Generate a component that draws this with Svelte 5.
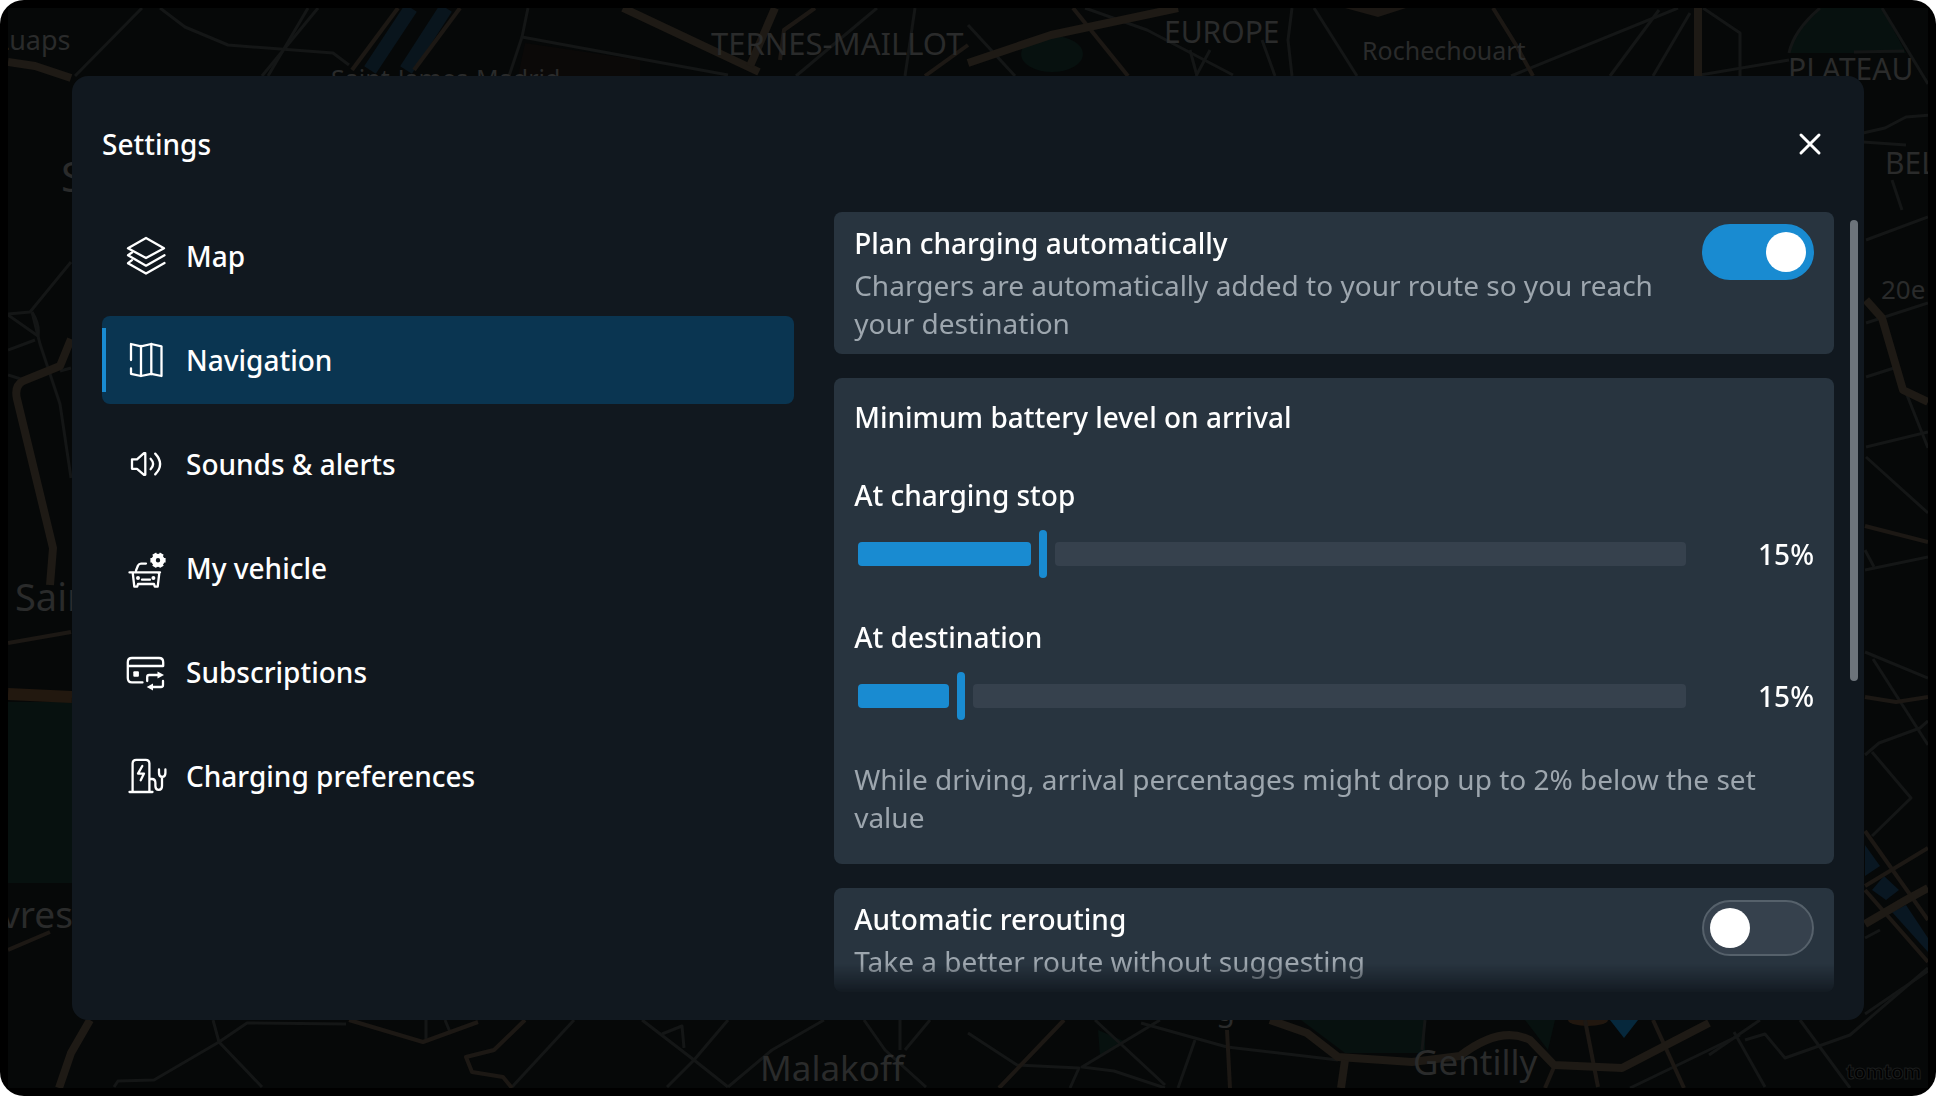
<script lang="ts">
  let active = $state("navigation");
  let planCharging = $state(true);
  let rerouting = $state(false);

  const menu = [
    { id: "map", label: "Map" },
    { id: "navigation", label: "Navigation" },
    { id: "sounds", label: "Sounds & alerts" },
    { id: "vehicle", label: "My vehicle" },
    { id: "subscriptions", label: "Subscriptions" },
    { id: "charging", label: "Charging preferences" },
  ];

  let levels = $state([
    { id: "stop", label: "At charging stop", position: 22, text: "15%" },
    { id: "destination", label: "At destination", position: 12, text: "15%" },
  ]);

  const streets = [
    "M142 8L75 76", "M160 8L185 27L228 45L333 53L349 65", "M318 8L262 76", "M308 8L268 76", "M528 8L522 37L509 76",
    "M522 37L728 75", "M877 8L796 76", "M915 8L905 76", "M968 25L1015 76", "M1085 8L1147 30L1233 75", "M1292 8L1288 40L1292 76",
    "M1314 8L1357 76", "M1262 40L1275 76", "M1190 50L1197 76", "M1210 50L1196 76", "M1678 8L1511 76", "M1659 10L1610 76", "M1690 13L1653 76",
    "M1703 8L1740 33L1740 76", "M1700 75L1789 60", "M1820 8Q1794 30 1789 53", "M1882 8L1928 84", "M1854 52L1904 51",
    "M1863 133L1885 128L1906 117L1930 115", "M1863 142L1906 145", "M1892 180L1902 210", "M1866 240L1928 217", "M1866 323L1928 303",
    "M1866 377L1894 368", "M1905 390L1928 448", "M1866 447L1928 432", "M1866 457L1928 513", "M1865 570L1928 557",
    "M1865 550L1874 567", "M1865 652L1928 678", "M1873 659L1928 745", "M1865 755L1879 743L1920 728L1928 721",
    "M1872 752L1911 798L1872 836", "M1865 1014L1928 971", "M1865 938L1880 930",
    "M8 314L30 312L71 262", "M32 312L40 344L60 404L71 478", "M32 312Q40 325 38 336L8 315", "M8 350L35 340", "M8 375L24 380M60 371L71 368",
    "M114 1087L118 1081L154 1080L219 1042L247 1023L346 1024", "M213 1020L219 1042L262 1087", "M426 1040L426 1020", "M445 1020L450 1032",
    "M574 1020L512 1087", "M642 1020L694 1060L728 1087", "M728 1020L694 1060L667 1087", "M662 1034L682 1026L684 1048", "M824 1020L772 1050L728 1087",
    "M864 1020L885 1050L926 1087", "M900 1020L900 1050", "M930 1020L905 1050", "M968 1033L1017 1065L1079 1068L1070 1088",
    "M1095 1020L1165 1085", "M1160 1020L1082 1067L1114 1071L1165 1088", "M1141 1023L1227 1047L1338 1060", "M1195 1040L1178 1088",
    "M1425 1020L1422 1050", "M1734 1032L1765 1087", "M1709 1055L1760 1020", "M1745 1040L1765 1034L1785 1058L1850 1035L1928 968",
    "M1800 1020L1850 1088", "M1630 1088L1740 1035",
  ];
  const thinRoads = [
    "M398 8L352 70", "M460 8L414 70", "M1073 8L1128 76", "M1493 8L1516 45L1533 76", "M8 643L71 632", "M1865 526L1928 542",
    "M1865 697L1896 702L1928 697", "M1865 831L1928 920", "M1865 886L1928 848", "M1865 890L1928 962", "M1064 1020L999 1088",
    "M349 1020L423 1042L478 1022", "M525 1020L494 1050L466 1057L472 1072L503 1077L512 1088", "M1585 1020L1598 1087",
    "M1653 1020L1684 1088", "M1554 1067L1545 1088", "M815 8L784 30L780 60", "M925 76L968 45", "M8 950L50 932", "M1227 1030L1230 1088",
  ];
  const mainRoads = [
    "M623 8L759 72", "M775 8L750 66", "M968 63L1051 35L1178 8", "M1698 8L1698 76", "M1866 300L1882 318L1903 390L1928 402",
    "M1865 924L1906 900L1928 888", "M71 339L60 366L23 381Q14 386 17 399L53 548L50 585", "M90 1020L71 1053L59 1088",
    "M1270 1020L1307 1033L1338 1057L1412 1062L1460 1056Q1500 1025 1530 1040L1554 1065L1622 1068L1709 1023",
    "M1345 1060L1341 1088", "M8 62L35 66L71 78",
  ];
  const places = [
    { name: "Luaps", x: -5, y: 50, size: 27 },
    { name: "Saint-James-Madrid", x: 331, y: 88, size: 25 },
    { name: "TERNES-MAILLOT", x: 711, y: 55, size: 31 },
    { name: "EUROPE", x: 1164, y: 43, size: 30 },
    { name: "Rochechouart", x: 1362, y: 60, size: 25 },
    { name: "PLATEAU", x: 1788, y: 80, size: 30 },
    { name: "BEL", x: 1885, y: 174, size: 30 },
    { name: "20e", x: 1881, y: 299, size: 26 },
    { name: "S", x: 61, y: 192, size: 42 },
    { name: "Sain", x: 15, y: 611, size: 38 },
    { name: "vres-", x: 1, y: 928, size: 37 },
    { name: "Malakoff", x: 760, y: 1081, size: 35 },
    { name: "g", x: 1216, y: 1021, size: 31 },
    { name: "Gentilly", x: 1413, y: 1075, size: 35 },
  ];
</script>

{#snippet toggle(checked: boolean, id: string, onchange: () => void)}
  <input class="toggle" type="checkbox" role="switch" {id} {checked} {onchange} />
{/snippet}

<div class="screen">
  <svg class="map" viewBox="8 8 1920 1080" preserveAspectRatio="xMidYMid slice" aria-hidden="true">
    <rect x="8" y="8" width="1920" height="1080" fill="#060808" />
    <g fill="#07110f">
      <path d="M8 702H72V883H8z" />
      <ellipse cx="1052" cy="54" rx="31" ry="18" />
      <path d="M1820 8H1882L1906 53H1789Q1794 30 1820 8z" />
      <path d="M1301 1020H1425V1053H1345z" />
      <path d="M1525 1020H1555L1548 1050z" />
      <path d="M1098 1030L1126 1042L1100 1056z" />
    </g>
    <path d="M525 43L640 60V76H518z" fill="#0b0908" />
    <g stroke="#09151d" stroke-width="14">
      <path d="M411 8L370 70M446 8L406 70" />
    </g>
    <g fill="#091722">
      <path d="M1865 845L1880 866L1865 876z" />
      <path d="M1872 890L1884 876L1899 890L1886 900z" />
      <path d="M1892 912L1906 905L1928 938V952z" />
    </g>
    <path d="M1345 8L1378 17L1406 8z" fill="#1c1814" />
    <ellipse cx="1588" cy="1020" rx="20" ry="6" fill="#21170f" />
    <path d="M1610 1020H1638L1624 1038z" fill="#06283c" />
    <g fill="none" stroke-linejoin="round">
      <g stroke="#141616" stroke-width="3">
        {#each streets as d}<path {d} />{/each}
      </g>
      <g stroke="#1c1814" stroke-width="4">
        {#each thinRoads as d}<path {d} />{/each}
      </g>
      <g stroke="#1e1a15" stroke-width="8">
        {#each mainRoads as d}<path {d} />{/each}
      </g>
      <path d="M8 694L72 697" stroke="#22180f" stroke-width="12" />
    </g>
    <g class="places">
      {#each places as place}
        <text x={place.x} y={place.y} font-size={place.size}>{place.name}</text>
      {/each}
    </g>
    <text class="brand" x="1846" y="1079">tomtom</text>
  </svg>

  <main class="panel">
    <header>
      <h1>Settings</h1>
      <button class="close" aria-label="Close">
        <svg viewBox="0 0 48 48"><path d="M15 15L33 33M33 15L15 33" stroke-width="3" /></svg>
      </button>
    </header>

    <div class="body">
      <nav>
        {#each menu as item}
          <button class="menu-item" class:active={active === item.id} onclick={() => (active = item.id)}>
            <svg viewBox="0 0 48 48" aria-hidden="true">
              {#if item.id === "map"}
                <path d="M24 6L42 16.3L24 26L6 16.3z" />
                <path d="M10 20.5L6 23.2L24 33.7L42.5 23.2" />
                <path d="M10 28.2L6 31.2L24 41.5L42.5 31" />
              {:else if item.id === "navigation"}
                <path d="M9 24V8L19 10.3L29.3 8L39.5 10.3V40L29.3 37.8L19 40L9 37.8V32.5" />
                <path d="M19 10V40M29.3 8V38" />
              {:else if item.id === "sounds"}
                <path d="M10 19.3H15L22 13.2H23.3V34.8H22L15 28.8H10z" />
                <path d="M28.6 18.8Q33.6 24 28.6 29.2M33.2 13.6Q43 24 33.2 34.4" />
              {:else if item.id === "vehicle"}
                <path d="M14 26.5L16 21.5Q17 19.6 19 19.6H24M7.5 28.4H38M10.8 29.5L12.3 42.7H15.2L16 40H32L32.8 42.7H35.7L37.2 30Q37 28.4 35 28.4" />
                <path d="M20 35.7H28" />
                <circle class="solid" cx="16" cy="34" r="2" />
                <circle class="solid" cx="31.4" cy="34" r="2" />
                <path class="gear" d="M32.2 9.7L34.5 13.7M39.8 9.7L37.5 13.7M43.6 16.3H39M39.8 22.9L37.5 18.9M32.2 22.9L34.5 18.9M28.4 16.3H33" />
                <circle cx="36" cy="16.3" r="4.4" stroke-width="4.4" />
              {:else if item.id === "subscriptions"}
                <path d="M20.5 34.4H10Q5.8 34.4 5.8 30V14.3Q5.8 10 10 10H37Q41.2 10 41.2 14.3V18H6" />
                <rect class="solid" x="11.3" y="23.2" width="5.6" height="5.6" rx="1" />
                <path d="M25.2 33V29Q25.2 27 27.2 27H36M41 33V37Q41 39 39 39H30" />
                <path class="solid" d="M35.5 23.4L42 27L35.5 30.6zM31 35.4L24.7 39L31 42.6z" />
              {:else}
                <path d="M7.5 40H30.5M10.6 40V11.5Q10.6 7.8 14.3 7.8H23.7Q27.4 7.8 27.4 11.5V40" />
                <path d="M20.3 14L16 21.6H22L18.7 28.3" />
                <path d="M28 27H30Q33.4 27 33.4 31V34Q33.4 37.8 36.7 37.8Q40 37.8 40 34V25M37 17.5V21Q37 24.8 40.2 24.8Q43.4 24.8 43.4 21V17.5" />
              {/if}
            </svg>
            {item.label}
          </button>
        {/each}
      </nav>

      <div class="cards">
        <section class="card row">
          <div class="text">
            <label for="plan">Plan charging automatically</label>
            <p>Chargers are automatically added to your route so you reach your destination</p>
          </div>
          {@render toggle(planCharging, "plan", () => (planCharging = !planCharging))}
        </section>

        <section class="card battery">
          <h2>Minimum battery level on arrival</h2>
          {#each levels as level}
            <div class="level">
              <label for={level.id}>{level.label}</label>
              <div class="level-row">
                <div class="slider">
                  <div class="fill" style="width: calc((100% - 8px) * {level.position / 100} - 8px)"></div>
                  <div class="thumb"></div>
                  <div class="rest"></div>
                  <input type="range" id={level.id} min="0" max="100" bind:value={level.position} />
                </div>
                <output for={level.id}>{level.text}</output>
              </div>
            </div>
          {/each}
          <p>While driving, arrival percentages might drop up to 2% below the set value</p>
        </section>

        <section class="card row">
          <div class="text">
            <label for="reroute">Automatic rerouting</label>
            <p>Take a better route without suggesting</p>
          </div>
          {@render toggle(rerouting, "reroute", () => (rerouting = !rerouting))}
        </section>
      </div>
      <div class="scrollbar"></div>
    </div>
  </main>
</div>

<style>
  :global(body) {
    background: #fff;
  }

  .screen {
    position: relative;
    box-sizing: border-box;
    display: flex;
    height: 100vh;
    padding: 76px 72px;
    background: #000;
    border-radius: 24px;
    overflow: hidden;
    font-family: "Noto Sans", "Open Sans", sans-serif;
    font-size: 28px;
    font-weight: 500;
    line-height: 38px;
    color: #fff;
  }

  .map {
    position: absolute;
    top: 8px;
    left: 8px;
    width: calc(100% - 16px);
    height: calc(100% - 16px);
  }

  .places {
    fill: #2a2b2b;
    font-weight: 400;
  }

  .brand {
    font-family: Lato, sans-serif;
    font-size: 21px;
    font-weight: 900;
    fill: #000;
    stroke: #1c1e1e;
    stroke-width: 1px;
  }

  .panel {
    position: relative;
    flex: 1;
    min-width: 0;
    display: flex;
    flex-direction: column;
    background: #11181f;
    border-radius: 16px;
  }

  header {
    display: flex;
    align-items: center;
    justify-content: space-between;
    height: 136px;
    padding: 0 30px;
  }

  h1,
  h2,
  p {
    margin: 0;
    font-size: inherit;
    font-weight: inherit;
  }

  button {
    padding: 0;
    border: 0;
    background: none;
    color: inherit;
    font: inherit;
    cursor: pointer;
  }

  button svg {
    display: block;
    flex: none;
    width: 48px;
    height: 48px;
    fill: none;
    stroke: #fff;
    stroke-width: 2.3;
    stroke-linecap: round;
    stroke-linejoin: round;
  }

  button svg .solid {
    fill: #fff;
    stroke: none;
  }

  button svg .gear {
    stroke-width: 4.4;
    stroke-linecap: butt;
  }

  .body {
    position: relative;
    flex: 1;
    min-height: 0;
    display: grid;
    grid-template-columns: 9fr 13fr;
    grid-template-rows: minmax(0, 1fr);
    gap: 40px;
    padding: 0 30px 28px;
  }

  nav {
    display: flex;
    flex-direction: column;
    gap: 16px;
  }

  .menu-item {
    position: relative;
    display: flex;
    align-items: center;
    gap: 16px;
    height: 88px;
    padding: 0 20px;
    border-radius: 8px;
    text-align: left;
  }

  .menu-item.active {
    background: #0a3551;
  }

  .menu-item.active::before {
    content: "";
    position: absolute;
    left: 0;
    top: 12px;
    bottom: 12px;
    width: 4px;
    background: #198bd1;
  }

  .cards {
    display: flex;
    flex-direction: column;
    gap: 24px;
    overflow-y: auto;
    scrollbar-width: none;
    mask-image: linear-gradient(to bottom, #000 calc(100% - 28px), rgba(0, 0, 0, 0.1) 100%);
  }

  .card {
    flex: none;
    padding: 12px 20px;
    background: #28343f;
    border-radius: 8px;
  }

  .card label {
    display: block;
  }

  .card p {
    color: #9da6ae;
    font-weight: 400;
  }

  .row {
    display: flex;
    align-items: flex-start;
    gap: 32px;
  }

  .text {
    flex: 1;
    display: flex;
    flex-direction: column;
    gap: 4px;
  }

  .toggle {
    appearance: none;
    box-sizing: border-box;
    flex: none;
    display: flex;
    width: 112px;
    height: 56px;
    margin: 0;
    padding: 6px;
    border: 2px solid #56616b;
    border-radius: 28px;
    background: #36414d;
    cursor: pointer;
  }

  .toggle::before {
    content: "";
    width: 40px;
    height: 40px;
    border-radius: 50%;
    background: #fff;
  }

  .toggle:checked {
    justify-content: flex-end;
    border-color: #198bd1;
    background: #198bd1;
  }

  .battery {
    display: flex;
    flex-direction: column;
    gap: 40px;
    padding: 20px 20px 28px;
  }

  .level {
    display: flex;
    flex-direction: column;
    gap: 16px;
  }

  .level-row {
    display: flex;
    align-items: center;
    padding-left: 4px;
  }

  .level-row output {
    width: 128px;
    text-align: right;
  }

  .slider {
    position: relative;
    flex: 1;
    display: flex;
    align-items: center;
    gap: 8px;
    height: 48px;
  }

  .fill,
  .rest {
    height: 24px;
    border-radius: 4px;
  }

  .fill {
    background: #198bd1;
  }

  .rest {
    flex: 1;
    background: #36414d;
  }

  .thumb {
    width: 8px;
    height: 48px;
    border-radius: 4px;
    background: #198bd1;
  }

  .slider input {
    position: absolute;
    inset: 0;
    width: 100%;
    height: 100%;
    margin: 0;
    opacity: 0;
    cursor: pointer;
  }

  .scrollbar {
    position: absolute;
    top: 8px;
    right: 6px;
    width: 8px;
    height: 57%;
    border-radius: 4px;
    background: #6d747b;
  }
</style>
